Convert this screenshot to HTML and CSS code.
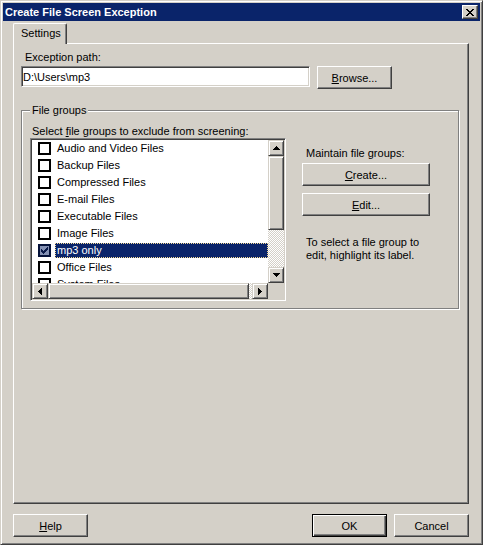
FILE: index.html
```html
<!DOCTYPE html>
<html lang="en">
<head>
    <meta charset="UTF-8">
    <meta name="viewport" content="width=device-width, initial-scale=1.0">
    <title>Create File Screen Exception</title>
    <link rel="stylesheet" href="styles.css">
</head>
<body>
    <div class="window">
        <div class="titlebar">
            <span class="title">Create File Screen Exception</span>
            <button class="close-btn" aria-label="Close">
                <svg width="8" height="7" viewBox="0 0 8 7"><path d="M0 0h2v1H0zM6 0h2v1H6zM1 1h2v1H1zM5 1h2v1H5zM2 2h4v1H2zM3 3h2v1H3zM2 4h4v1H2zM1 5h2v1H1zM5 5h2v1H5zM0 6h2v1H0zM6 6h2v1H6z" fill="#000"/></svg>
            </button>
        </div>

        <div class="tabs">
            <div class="tab">Settings</div>
        </div>

        <div class="panel">
            <div class="field-label">Exception path:</div>
            <div class="path-row">
                <input type="text" class="textbox" value="D:\Users\mp3">
                <button class="btn"><u>B</u>rowse...</button>
            </div>

            <div class="group">
                <div class="group-title">File groups</div>
                <div class="group-body">
                    <div class="list-col">
                        <div class="list-label">Select <u>f</u>ile groups to exclude from screening:</div>
                        <div class="listbox">
                            <div class="list-items">
                                <div class="item"><span class="check"></span><span class="item-text">Audio and Video Files</span></div>
                                <div class="item"><span class="check"></span><span class="item-text">Backup Files</span></div>
                                <div class="item"><span class="check"></span><span class="item-text">Compressed Files</span></div>
                                <div class="item"><span class="check"></span><span class="item-text">E-mail Files</span></div>
                                <div class="item"><span class="check"></span><span class="item-text">Executable Files</span></div>
                                <div class="item"><span class="check"></span><span class="item-text">Image Files</span></div>
                                <div class="item selected">
                                    <span class="check checked">
                                        <svg width="7" height="7" viewBox="0 0 7 7"><path d="M6 0h1v1H6zM5 1h2v1H5zM0 2h1v1H0zM4 2h3v1H4zM0 3h2v1H0zM3 3h3v1H3zM0 4h5v1H0zM1 5h3v1H1zM2 6h1v1H2z" fill="#0a1a4a"/></svg>
                                    </span>
                                    <span class="item-text">mp3 only</span>
                                </div>
                                <div class="item"><span class="check"></span><span class="item-text">Office Files</span></div>
                                <div class="item"><span class="check"></span><span class="item-text">System Files</span></div>
                            </div>
                            <div class="vscroll">
                                <div class="sb-btn">
                                    <svg width="7" height="4" viewBox="0 0 7 4"><path d="M3 0h1v1H3zM2 1h3v1H2zM1 2h5v1H1zM0 3h7v1H0z"/></svg>
                                </div>
                                <div class="sb-btn thumb-v"></div>
                                <div class="track"></div>
                                <div class="sb-btn">
                                    <svg width="7" height="4" viewBox="0 0 7 4"><path d="M0 0h7v1H0zM1 1h5v1H1zM2 2h3v1H2zM3 3h1v1H3z"/></svg>
                                </div>
                            </div>
                            <div class="hscroll">
                                <div class="sb-btn">
                                    <svg width="4" height="7" viewBox="0 0 4 7"><path d="M3 0h1v7H3zM2 1h1v5H2zM1 2h1v3H1zM0 3h1v1H0z"/></svg>
                                </div>
                                <div class="sb-btn thumb-h"></div>
                                <div class="track"></div>
                                <div class="sb-btn">
                                    <svg width="4" height="7" viewBox="0 0 4 7"><path d="M0 0h1v7H0zM1 1h1v5H1zM2 2h1v3H2zM3 3h1v1H3z"/></svg>
                                </div>
                            </div>
                            <div class="corner"></div>
                        </div>
                    </div>

                    <div class="side-col">
                        <div class="side-text">Maintain file groups:</div>
                        <button class="btn wide create"><u>C</u>reate...</button>
                        <button class="btn wide edit"><u>E</u>dit...</button>
                        <p class="side-text hint">To select a file group to edit, highlight its label.</p>
                    </div>
                </div>
            </div>
        </div>

        <div class="footer">
            <button class="btn"><u>H</u>elp</button>
            <div class="footer-right">
                <button class="btn default">OK</button>
                <button class="btn">Cancel</button>
            </div>
        </div>
    </div>
</body>
</html>
```

FILE: styles.css
```css
* {
    box-sizing: border-box;
}

body {
    margin: 0;
    font-family: "Liberation Sans", Arial, sans-serif;
    font-size: 11px;
    color: #000;
    background: #d4d0c8;
}

u {
    text-underline-offset: 1px;
}

.window {
    width: 483px;
    height: 545px;
    padding: 2px;
    background: #d4d0c8;
    border: 1px solid;
    border-color: #d4d0c8 #404040 #404040 #d4d0c8;
    box-shadow: inset 1px 1px #fff, inset -1px -1px #808080;
}

/* title bar */
.titlebar {
    height: 18px;
    padding: 0 2px;
    background: #0a246a;
    color: #fff;
    display: flex;
    align-items: center;
    justify-content: space-between;
}

.title {
    font-weight: bold;
    line-height: 18px;
}

.close-btn {
    width: 16px;
    height: 14px;
    padding: 0;
    background: #d4d0c8;
    border: 1px solid;
    border-color: #fff #404040 #404040 #fff;
    box-shadow: inset -1px -1px #808080;
    display: flex;
    align-items: center;
    justify-content: center;
}

/* tabs */
.tabs {
    display: flex;
    margin: 2px 0 0 10px;
}

.tab {
    position: relative;
    width: 54px;
    height: 21px;
    margin-bottom: -1px;
    padding: 3px 0 0 7px;
    line-height: 13px;
    background: #d4d0c8;
    border-top: 1px solid #fff;
    border-left: 1px solid #fff;
    border-right: 1px solid #404040;
    border-radius: 2px 2px 0 0;
    box-shadow: inset -1px 0 #808080;
}

.panel {
    width: 456px;
    height: 461px;
    margin-left: 10px;
    padding: 7px 0 0 7px;
    border: 1px solid;
    border-color: #fff #404040 #404040 #fff;
    box-shadow: inset -1px -1px #808080;
}

.field-label {
    padding-left: 4px;
    line-height: 13px;
}

.path-row {
    display: flex;
    align-items: flex-start;
    gap: 7px;
    margin-top: 2px;
}

.textbox {
    width: 289px;
    height: 21px;
    padding: 0 0 0 1px;
    font: inherit;
    color: #000;
    background: #fff;
    border: 1px solid;
    border-color: #808080 #fff #fff #808080;
    box-shadow: inset 1px 1px #404040, inset -1px -1px #d4d0c8;
    outline: none;
}

/* buttons */
.btn {
    width: 75px;
    height: 23px;
    padding: 0;
    font: inherit;
    color: #000;
    background: #d4d0c8;
    border: 1px solid;
    border-color: #fff #404040 #404040 #fff;
    box-shadow: inset -1px -1px #808080;
}

.btn.default {
    border-color: #000;
    box-shadow: inset 1px 1px #fff, inset -1px -1px #404040, inset -2px -2px #808080;
}

.btn.wide {
    width: 128px;
    display: block;
}

/* file groups box */
.group {
    width: 438px;
    height: 199px;
    margin-top: 21px;
    padding-left: 8px;
    border: 1px solid #808080;
    box-shadow: inset 1px 1px #fff, 1px 1px #fff;
}

.group-title {
    width: fit-content;
    margin-top: -7px;
    padding: 0 2px;
    line-height: 13px;
    background: #d4d0c8;
}

.group-body {
    display: flex;
    gap: 16px;
    margin-top: 8px;
}

.list-label {
    padding-left: 2px;
    line-height: 13px;
}

.listbox {
    width: 256px;
    height: 163px;
    padding: 1px;
    background: #fff;
    border: 1px solid;
    border-color: #808080 #fff #fff #808080;
    box-shadow: inset 1px 1px #404040, inset -1px -1px #d4d0c8;
    display: grid;
    grid-template-columns: 1fr 16px;
    grid-template-rows: 1fr 16px;
}

.list-items {
    overflow: hidden;
    background: #fff;
}

.item {
    height: 17px;
    padding-left: 6px;
    display: flex;
    align-items: center;
}

.check {
    flex: none;
    width: 13px;
    height: 13px;
    margin-right: 4px;
    background: #fff;
    border: 2px solid #000;
    display: flex;
    align-items: center;
    justify-content: center;
}

.check.checked {
    background: #8491b4;
    border-color: #05123a;
}

.item-text {
    flex: 1;
    padding-left: 2px;
    line-height: 15px;
    white-space: nowrap;
}

.item.selected .item-text {
    background: #0a246a;
    color: #fff;
    outline: 1px dotted #f5db95;
    outline-offset: -1px;
}

/* scrollbars */
.vscroll {
    display: flex;
    flex-direction: column;
}

.hscroll {
    display: flex;
}

.sb-btn {
    flex: none;
    width: 16px;
    height: 16px;
    background: #d4d0c8;
    border: 1px solid;
    border-color: #d4d0c8 #404040 #404040 #d4d0c8;
    box-shadow: inset 1px 1px #fff, inset -1px -1px #808080;
    display: flex;
    align-items: center;
    justify-content: center;
}

.thumb-v {
    height: 74px;
}

.thumb-h {
    width: 201px;
}

.track {
    flex: 1;
    background-color: #fff;
    background-image: repeating-conic-gradient(#d4d0c8 0 25%, #fff 0 50%);
    background-size: 2px 2px;
}

.corner {
    background: #d4d0c8;
}

.side-col {
    width: 128px;
    padding-top: 22px;
}

.side-text {
    padding-left: 4px;
    line-height: 13px;
}

.create {
    margin-top: 3px;
}

.edit {
    margin-top: 7px;
}

.hint {
    margin: 20px 0 0;
}

.footer {
    display: flex;
    justify-content: space-between;
    margin: 10px 11px 0 10px;
}

.footer-right {
    display: flex;
    gap: 7px;
}
```
